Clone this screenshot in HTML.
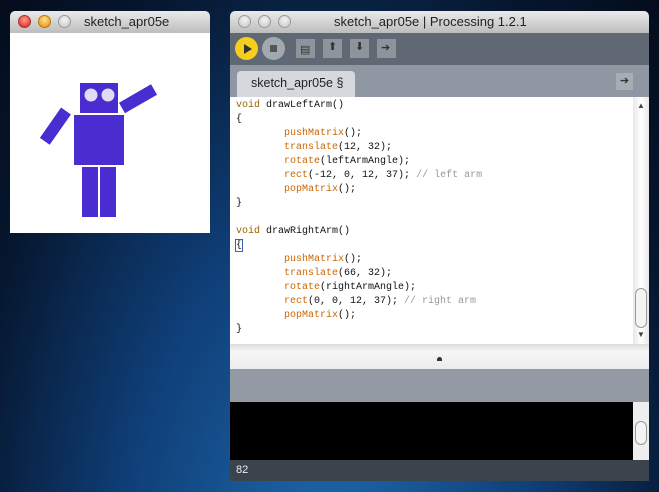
<!DOCTYPE html>
<html><head><style>
*{margin:0;padding:0;box-sizing:border-box}
body{width:659px;height:492px;overflow:hidden;position:relative;background:radial-gradient(ellipse at 50% 120%,#1f6cb0 0%,#0f3f78 45%,#06162e 80%,#040c1c 100%);font-family:"Liberation Sans",sans-serif}
.abs{position:absolute}
.tb{background:linear-gradient(#eaeaea,#bdbdbd);border-radius:5px 5px 0 0;height:22px}
.dot{position:absolute;top:4px;width:13px;height:13px;border-radius:50%;border:1px solid #999;background:radial-gradient(circle at 50% 35%,#f4f4f4,#c4c4c4)}
.title{position:absolute;top:3px;font-size:13px;color:#222}
.code{position:absolute;left:236px;top:99px;font-family:"Liberation Mono",monospace;font-size:10px;line-height:14px;color:#111;white-space:pre}
.k{color:#cc6600}.kw{color:#996600}.c{color:#999}
.btn{position:absolute;top:39px;width:19px;height:19px;background:#8d949c}
</style></head><body>
<div class="abs tb" style="left:10px;top:11px;width:200px"></div>
<div class="dot" style="left:18px;top:15px;background:radial-gradient(circle at 50% 35%,#ff9a8a,#d81e12);border-color:#a33"></div>
<div class="dot" style="left:38px;top:15px;background:radial-gradient(circle at 50% 35%,#ffe08a,#e58a10);border-color:#b70"></div>
<div class="dot" style="left:58px;top:15px"></div>
<div class="title" style="left:84px;top:14px">sketch_apr05e</div>
<div class="abs" style="left:10px;top:33px;width:200px;height:200px;background:#fff"></div>
<svg class="abs" style="left:10px;top:33px" width="200" height="200">
<g fill="#4a2dd0">
<rect x="70" y="50" width="38" height="30"/>
<rect x="64" y="82" width="50" height="50"/>
<rect x="72" y="134" width="16" height="50"/>
<rect x="90" y="134" width="16" height="50"/>
<rect x="-6" y="0" width="12" height="37" transform="translate(56,78) rotate(35)"/>
<rect x="0" y="-6" width="37" height="12" transform="translate(112,75) rotate(-30)"/>
</g>
<circle cx="81" cy="62" r="6.5" fill="#e0dcf4"/><circle cx="98" cy="62" r="6.5" fill="#e0dcf4"/>
</svg>
<div class="abs tb" style="left:230px;top:11px;width:419px"></div>
<div class="dot" style="left:238px;top:15px"></div>
<div class="dot" style="left:258px;top:15px"></div>
<div class="dot" style="left:278px;top:15px"></div>
<div class="title" style="left:334px;top:14px">sketch_apr05e | Processing 1.2.1</div>
<div class="abs" style="left:230px;top:33px;width:419px;height:32px;background:#5f6873"></div>
<div class="abs" style="left:235px;top:37px;width:23px;height:23px;border-radius:50%;background:#f5cf1c"></div>
<div class="abs" style="left:244px;top:44px;width:0;height:0;border-left:8px solid #333;border-top:5px solid transparent;border-bottom:5px solid transparent"></div>
<div class="abs" style="left:262px;top:37px;width:23px;height:23px;border-radius:50%;background:#a2a8b0"></div>
<div class="abs" style="left:270px;top:45px;width:7px;height:7px;background:#555"></div>
<div class="btn" style="left:296px"></div><div class="btn" style="left:323px"></div><div class="btn" style="left:350px"></div><div class="btn" style="left:377px"></div>
<div class="abs" style="left:300px;top:43px;font-size:11px;color:#333">▤</div>
<div class="abs" style="left:328px;top:40px;font-size:11px;color:#333">⬆</div>
<div class="abs" style="left:355px;top:40px;font-size:11px;color:#333">⬇</div>
<div class="abs" style="left:381px;top:41px;font-size:11px;color:#333">➔</div>
<div class="abs" style="left:230px;top:65px;width:419px;height:32px;background:#8f98a2"></div>
<div class="abs" style="left:237px;top:71px;width:118px;height:26px;background:#d5d9de;border-radius:4px 4px 0 0"></div>
<div class="abs" style="left:251px;top:76px;font-size:12.5px;color:#222">sketch_apr05e §</div>
<div class="abs" style="left:616px;top:73px;width:17px;height:17px;background:#a7adb5;color:#333;font-size:11px;text-align:center;line-height:17px">➔</div>
<div class="abs" style="left:230px;top:97px;width:403px;height:247px;background:#fff"></div>
<div class="abs" style="left:633px;top:97px;width:16px;height:247px;background:linear-gradient(90deg,#e8e8e8,#fff,#e8e8e8)"></div>
<div class="abs" style="left:635px;top:288px;width:12px;height:40px;border:1px solid #999;border-radius:6px;background:#f4f4f4"></div>
<div class="abs" style="left:637px;top:101px;font-size:8px;color:#444">▲</div>
<div class="abs" style="left:637px;top:330px;font-size:8px;color:#444">▼</div>
<div class="code"><span class="kw">void</span> drawLeftArm()
{
        <span class="k">pushMatrix</span>();
        <span class="k">translate</span>(12, 32);
        <span class="k">rotate</span>(leftArmAngle);
        <span class="k">rect</span>(-12, 0, 12, 37); <span class="c">// left arm</span>
        <span class="k">popMatrix</span>();
}

<span class="kw">void</span> drawRightArm()
<span style="outline:1px solid #36a">{</span>
        <span class="k">pushMatrix</span>();
        <span class="k">translate</span>(66, 32);
        <span class="k">rotate</span>(rightArmAngle);
        <span class="k">rect</span>(0, 0, 12, 37); <span class="c">// right arm</span>
        <span class="k">popMatrix</span>();
}</div>
<div class="abs" style="left:230px;top:344px;width:419px;height:25px;background:linear-gradient(#dcdcdc,#f6f6f6 30%,#ececec)"></div>
<div class="abs" style="left:437px;top:357px;width:5px;height:4px;background:#333;border-radius:3px 3px 0 0"></div>
<div class="abs" style="left:230px;top:369px;width:419px;height:33px;background:#939aa3"></div>
<div class="abs" style="left:230px;top:402px;width:403px;height:58px;background:#000"></div>
<div class="abs" style="left:633px;top:402px;width:16px;height:58px;background:#eee"></div>
<div class="abs" style="left:635px;top:421px;width:12px;height:24px;border:1px solid #999;border-radius:6px;background:#f4f4f4"></div>
<div class="abs" style="left:230px;top:460px;width:419px;height:21px;background:#3b434d"></div>
<div class="abs" style="left:236px;top:464px;font-size:11px;color:#eee">82</div>
</body></html>
